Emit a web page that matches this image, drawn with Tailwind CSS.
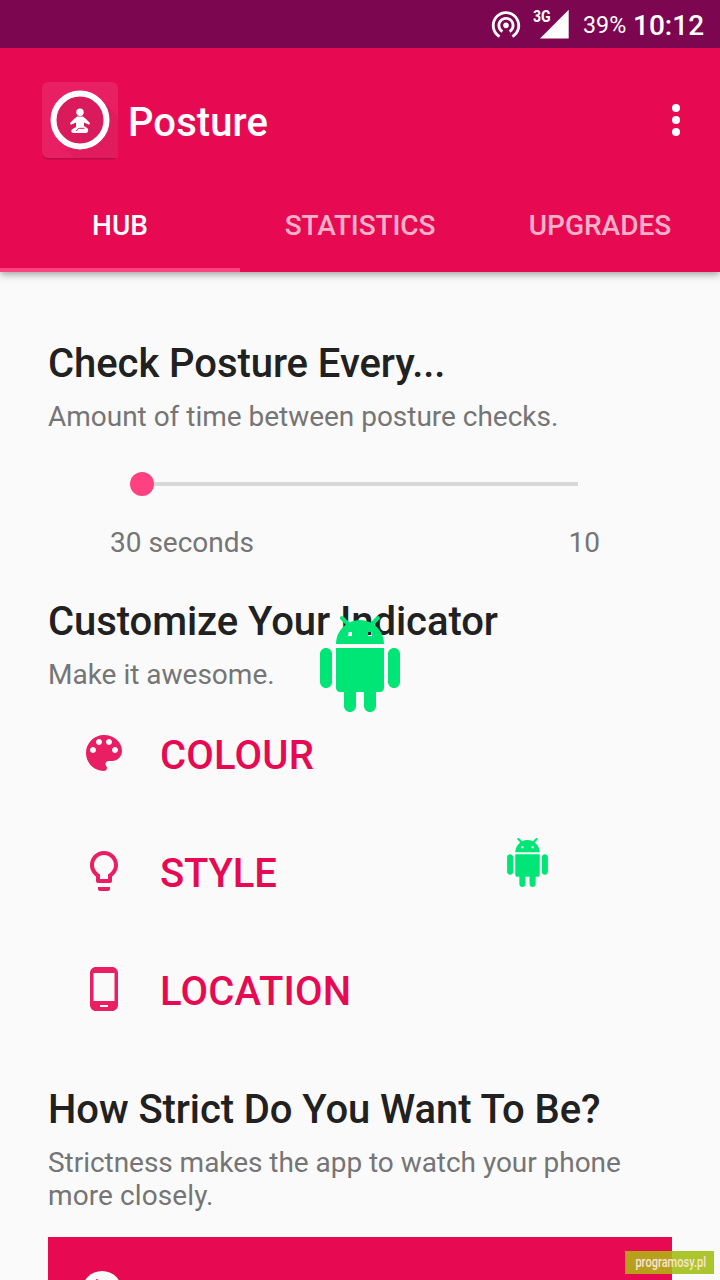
<!DOCTYPE html>
<html lang="en">
<head>
    <meta charset="UTF-8">
    <meta name="viewport" content="width=device-width, initial-scale=1.0">
    <title>Posture</title>
    <script src="https://cdn.jsdelivr.net/npm/@tailwindcss/browser@4"></script>
</head>
<body class="bg-[#fafafa]">
<div class="relative w-[720px] h-[1280px] overflow-hidden bg-[#fafafa] font-[Roboto,sans-serif]">
    <!-- Status bar -->
    <div class="relative z-10 flex h-12 items-start justify-end bg-[#7c0650] pr-4 text-white">
        <svg class="mt-[7px] mr-[10px] size-[34px]" viewBox="0 0 24 24" fill="currentColor"><path d="M12 11c-1.1 0-2 .9-2 2s.9 2 2 2 2-.9 2-2-.9-2-2-2zm6 2c0-3.31-2.69-6-6-6s-6 2.69-6 6c0 2.22 1.21 4.15 3 5.19l1-1.74c-1.19-.7-2-1.97-2-3.45 0-2.21 1.79-4 4-4s4 1.79 4 4c0 1.48-.81 2.75-2 3.45l1 1.74c1.79-1.04 3-2.97 3-5.19zM12 3C6.48 3 2 7.48 2 13c0 3.7 2.01 6.92 4.99 8.65l1-1.73C5.61 18.53 4 15.96 4 13c0-4.42 3.58-8 8-8s8 3.58 8 8c0 2.96-1.61 5.53-4 6.92l1 1.73c2.99-1.73 5-4.95 5-8.65 0-5.52-4.48-10-10-10z"/></svg>
        <div class="relative mr-[14px] h-12 w-9">
            <svg class="h-12 w-9" viewBox="0 0 36 48" fill="currentColor"><path d="M7 38.5 35.7 9.8V38.5z"/></svg>
            <span class="absolute top-[7px] left-0 origin-left scale-x-[.88] text-base leading-5 font-bold">3G</span>
        </div>
        <div class="mr-[6px] w-[44px] pt-[11px] text-2xl leading-7 whitespace-nowrap"><span class="inline-block origin-left scale-x-[.97]">39%</span></div>
        <div class="w-[71px] pt-[9px] text-[28px] leading-[33px] font-medium">10:12</div>
    </div>

    <!-- App bar -->
    <div class="bg-[#e70a53] text-white shadow-[0_2px_8px_rgba(0,0,0,0.4)]">
        <div class="flex h-32 items-start pr-9 pl-[42px]">
            <svg class="mt-[34px] h-[78px] w-[76px]" viewBox="0 0 76 78">
                <rect x="0" y="1.500" width="76" height="76" rx="6" fill="#b40b45" opacity=".8"/>
                <rect width="76" height="76" rx="6" fill="#e81f63"/>
                <path d="M60 18 76 34V76H32L16 58z" fill="#e01c5f"/>
                <circle cx="38" cy="38" r="26.5" fill="#d91b5c" stroke="#fff" stroke-width="6"/>
                <g fill="#fff">
                    <circle cx="38" cy="30.300" r="3.700"/>
                    <path d="M35 34.500h6l3 2.500 3.500 3.500c1.200 1.200 0 2.500-1.500 1.800L42 40.500V44l3 2c2 1.300 1.300 5-1 5H31.500c-2.600 0-2.800-3-.8-4l3.300-2v-4.500l-4 1.800c-1.500.7-2.700-.6-1.500-1.800L32 37z"/>
                </g>
                <path d="M34.500 49c.5-2 2-2.700 4.500-2.700h3.500" fill="none" stroke="#d91b5c"/>
            </svg>
            <div class="mt-[51px] ml-[10px] text-[40px] leading-[47px] font-medium tracking-[.1px]">Posture</div>
            <svg class="mt-14 ml-auto h-8 w-4" viewBox="0 0 16 32" fill="currentColor"><circle cx="8" cy="4" r="4"/><circle cx="8" cy="16" r="4"/><circle cx="8" cy="28" r="4"/></svg>
        </div>
        <div class="grid h-24 grid-cols-3 text-center text-[28px] leading-[33px] font-medium">
            <div class="border-b-4 border-[#ff4081] pt-[33px]">HUB</div>
            <div class="pt-[33px] tracking-[-.1px] text-white/70">STATISTICS</div>
            <div class="pt-[33px] text-white/70">UPGRADES</div>
        </div>
    </div>

    <!-- Hub page -->
    <div class="px-12 pt-[68px] text-[28px] leading-[33px] text-[#757575]">
        <h2 class="text-[40px] leading-[47px] font-medium tracking-[-.06px] text-[#212121]">Check Posture Every...</h2>
        <p class="mt-[13px] tracking-[-.02px]">Amount of time between posture checks.</p>
        <div class="mt-[39px] ml-[82px] flex w-[448px] items-center">
            <div class="size-6 rounded-full bg-[#ff4081]"></div>
            <div class="h-1 flex-1 bg-[#d8d8d8]"></div>
        </div>
        <div class="mt-[30px] ml-[62px] flex w-[490px] justify-between">
            <span>30 seconds</span>
            <span>10</span>
        </div>

        <h2 class="mt-[39px] text-[40px] leading-[47px] font-medium tracking-[-.06px] text-[#212121]">Customize Your Indicator</h2>
        <p class="mt-[13px]">Make it awesome.</p>
        <div class="mt-[4px] text-[40px] leading-[47px] font-medium text-[#e70a53]">
            <div class="flex h-[118px] items-center gap-8 pl-8">
                <svg class="mb-[2px] size-12" viewBox="0 0 24 24" fill="#e91e63"><path d="M12 3c-4.970 0-9 4.030-9 9s4.030 9 9 9c.83 0 1.500-.67 1.500-1.500 0-.39-.15-.74-.39-1.010-.23-.26-.38-.61-.38-.99 0-.83.67-1.500 1.500-1.500H16c2.760 0 5-2.240 5-5 0-4.420-4.030-8-9-8zm-5.500 9c-.83 0-1.500-.67-1.500-1.500S5.670 9 6.500 9 8 9.670 8 10.500 7.330 12 6.500 12zm3-4C8.670 8 8 7.330 8 6.500S8.670 5 9.500 5s1.500.67 1.500 1.500S10.330 8 9.500 8zm5 0c-.83 0-1.500-.67-1.500-1.500S13.670 5 14.500 5s1.500.67 1.500 1.500S15.330 8 14.500 8zm3 4c-.83 0-1.500-.67-1.500-1.500S16.670 9 17.500 9s1.500.67 1.500 1.500-.67 1.500-1.500 1.500z"/></svg>
                <span class="pt-[2px] tracking-[.2px]">COLOUR</span>
            </div>
            <div class="flex h-[118px] items-center gap-8 pl-8">
                <svg class="mb-[2px] size-12" viewBox="0 0 24 24" fill="#e91e63"><path d="M9 21c0 .55.45 1 1 1h4c.55 0 1-.45 1-1v-1H9v1zm3-19C8.140 2 5 5.140 5 9c0 2.380 1.190 4.470 3 5.740V17c0 .55.45 1 1 1h6c.55 0 1-.45 1-1v-2.260c1.810-1.270 3-3.360 3-5.740 0-3.860-3.140-7-7-7zm2.850 11.100l-.85.6V16h-4v-2.300l-.85-.6C7.800 12.160 7 10.630 7 9c0-2.760 2.240-5 5-5s5 2.240 5 5c0 1.630-.8 3.160-2.150 4.100z"/></svg>
                <span class="pt-[2px] tracking-[-.2px]">STYLE</span>
            </div>
            <div class="flex h-[118px] items-center gap-8 pl-8">
                <svg class="mb-[2px] size-12" viewBox="0 0 24 24" fill="#e91e63"><path d="M16 1H8C6.340 1 5 2.340 5 4v16c0 1.660 1.340 3 3 3h8c1.660 0 3-1.340 3-3V4c0-1.660-1.340-3-3-3zm-2 20h-4v-1h4v1zm3.250-3H6.750V4h10.500v14z"/></svg>
                <span class="pt-[2px] tracking-[.2px]">LOCATION</span>
            </div>
        </div>

        <h2 class="mt-[37px] text-[40px] leading-[47px] font-medium tracking-[-.08px] text-[#212121]">How Strict Do You Want To Be?</h2>
        <p class="mt-[13px] tracking-[-.04px]">Strictness makes the app to watch your phone <span class="tracking-[.1px]">more closely.</span></p>
        <div class="mt-[25px] h-24 bg-[#e70a53] pt-[34px] pl-[34px]">
            <svg class="size-10" viewBox="0 0 40 40"><circle cx="20" cy="20" r="20" fill="#fafafa"/><path d="M14 8v12h3V9z" fill="#e70a53"/></svg>
        </div>
    </div>

    <!-- Floating indicators -->
    <svg class="absolute top-[616px] left-[312px] size-24" viewBox="0 0 24 24">
        <path id="droid" fill="#00e676" d="M6 18c0 .55.45 1 1 1h1v3.500c0 .83.67 1.500 1.500 1.500s1.500-.67 1.500-1.500V19h2v3.500c0 .83.67 1.500 1.500 1.500s1.500-.67 1.500-1.500V19h1c.55 0 1-.45 1-1V8H6v10zM3.500 8C2.670 8 2 8.670 2 9.500v7c0 .83.67 1.500 1.500 1.500S5 17.330 5 16.500v-7C5 8.670 4.330 8 3.500 8zm17 0c-.83 0-1.500.67-1.500 1.500v7c0 .83.67 1.500 1.500 1.500s1.500-.67 1.500-1.500v-7c0-.83-.67-1.500-1.500-1.500zm-4.970-5.840l1.300-1.300c.2-.2.2-.51 0-.71-.2-.2-.51-.2-.71 0l-1.480 1.480C13.850 1.230 12.950 1 12 1c-.96 0-1.860.23-2.660.63L7.850.15c-.2-.2-.51-.2-.71 0-.2.2-.2.51 0 .71l1.310 1.310C6.970 3.260 6 5.010 6 7h12c0-1.990-.97-3.750-2.470-4.840zM10 5H9V4h1v1zm5 0h-1V4h1v1z"/>
    </svg>
    <svg class="absolute top-[838px] left-[503px] size-[49px]" viewBox="0 0 24 24"><use href="#droid"/></svg>

    <!-- Watermark -->
    <div class="absolute top-[1251px] left-[625px] flex h-[23px] w-[89px] items-center justify-center bg-[#abc52e] text-sm font-medium text-[#fbe3d0]">
        <div class="absolute inset-y-0 left-0 w-[47px] bg-[#b7a01b]"></div>
        <span class="relative left-px -top-px scale-x-[.79] whitespace-nowrap">programosy.pl</span>
    </div>
</div>
</body>
</html>
